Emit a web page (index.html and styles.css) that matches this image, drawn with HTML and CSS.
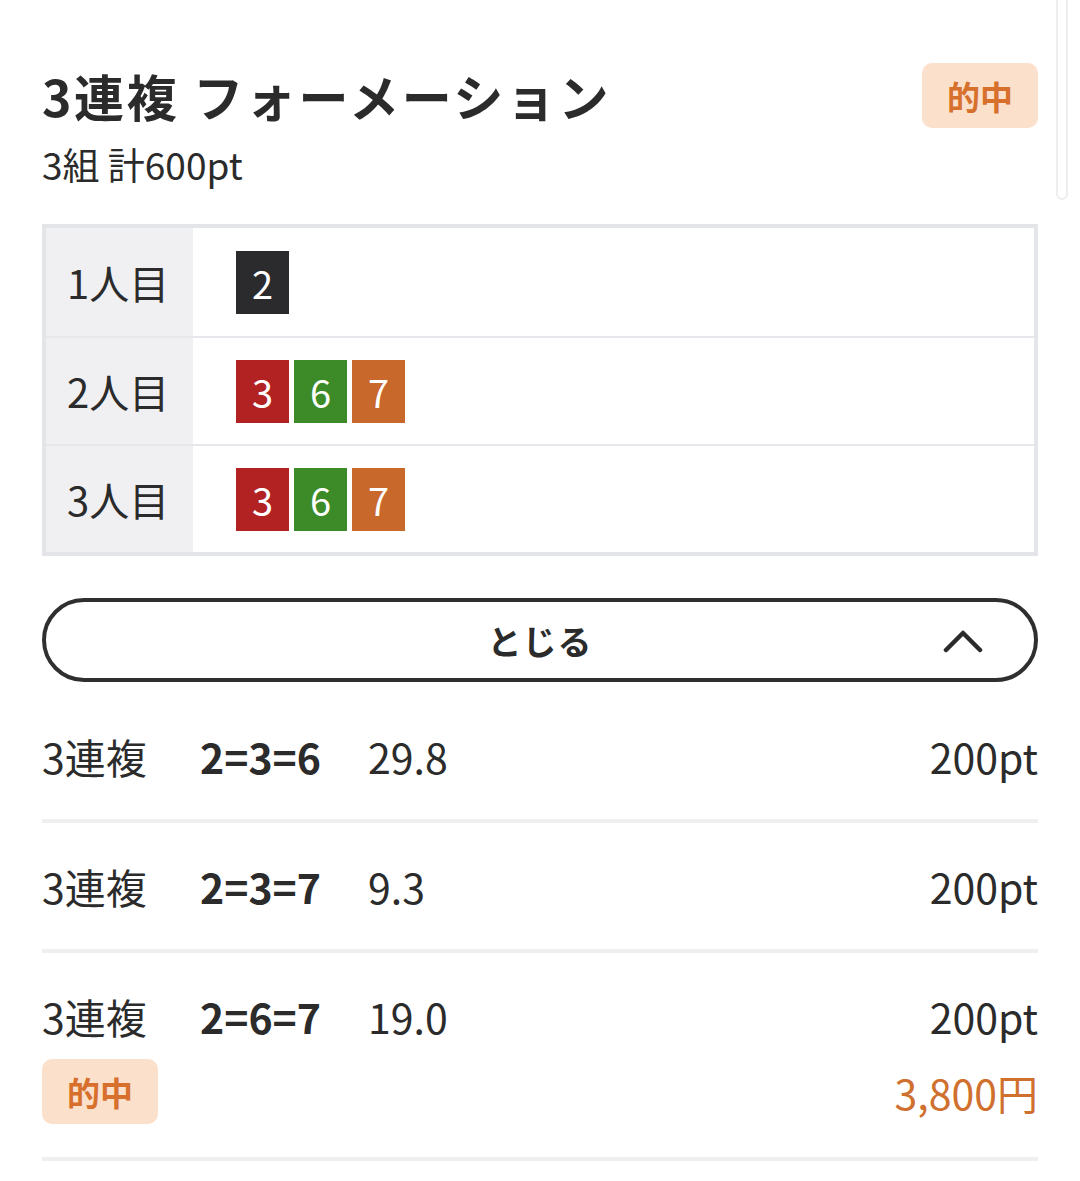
FILE: index.html
```html
<!DOCTYPE html>
<html lang="ja">
<head>
<meta charset="utf-8">
<link rel="stylesheet" href="styles.css">
</head>
<body>
<div class="scrollbar"></div>
<main class="page">
  <header class="head">
    <div class="head-text">
      <h1 class="title">3連複 フォーメーション</h1>
      <p class="sub">3組 計600pt</p>
    </div>
    <span class="badge badge-lg">的中</span>
  </header>

  <div class="table">
    <div class="trow">
      <div class="tlabel">1人目</div>
      <div class="tcell"><span class="num n-black">2</span></div>
    </div>
    <div class="trow">
      <div class="tlabel">2人目</div>
      <div class="tcell"><span class="num n-red">3</span><span class="num n-green">6</span><span class="num n-orange">7</span></div>
    </div>
    <div class="trow">
      <div class="tlabel">3人目</div>
      <div class="tcell"><span class="num n-red">3</span><span class="num n-green">6</span><span class="num n-orange">7</span></div>
    </div>
  </div>

  <button class="toggle">
    <span class="toggle-text">とじる</span>
    <svg class="chev" width="40" height="24" viewBox="0 0 40 24"><path d="M3 21 L20 4 L37 21" fill="none" stroke="#2b2b2b" stroke-width="4.5" stroke-linecap="round" stroke-linejoin="round"/></svg>
  </button>

  <ul class="list">
    <li class="item">
      <div class="line">
        <span class="kind">3連複</span><span class="combo">2=3=6</span><span class="odds">29.8</span><span class="pt">200pt</span>
      </div>
    </li>
    <li class="item">
      <div class="line">
        <span class="kind">3連複</span><span class="combo">2=3=7</span><span class="odds">9.3</span><span class="pt">200pt</span>
      </div>
    </li>
    <li class="item">
      <div class="line">
        <span class="kind">3連複</span><span class="combo">2=6=7</span><span class="odds">19.0</span><span class="pt">200pt</span>
      </div>
      <div class="line2">
        <span class="badge badge-sm">的中</span><span class="payout">3,800円</span>
      </div>
    </li>
  </ul>
</main>
</body>
</html>
```
FILE: styles.css
```css
* { box-sizing: border-box; }
html, body { margin: 0; padding: 0; background: #fff; }
body {
  font-family: "Noto Sans CJK JP", "Noto Sans", sans-serif;
  color: #2b2b2b;
}
.scrollbar {
  position: absolute;
  right: 12px;
  top: -10px;
  width: 12px;
  height: 210px;
  border: 2px solid #eeeeee;
  border-radius: 6px;
}
.page { padding: 63px 42px 0 42px; }
.head { display: flex; justify-content: space-between; align-items: flex-start; }
.title {
  margin: -3px 0 0 0;
  font-size: 50px;
  font-weight: 700;
  line-height: 70px;
  letter-spacing: 2.6px;
}
.sub {
  margin: 13px 0 0 0;
  font-size: 37px;
  font-weight: 400;
  line-height: 42px;
  letter-spacing: 0;
}
.badge {
  display: inline-flex;
  align-items: center;
  justify-content: center;
  background: #fbe0cc;
  color: #d7702c;
  font-weight: 700;
  border-radius: 10px;
}
.badge-lg { width: 116px; height: 65px; font-size: 33px; }
.badge-sm { width: 116px; height: 65px; font-size: 33px; }

.table {
  margin-top: 39px;
  border: 4px solid #e4e5e8;
  display: flex;
  flex-direction: column;
}
.trow { display: flex; height: 108px; }
.trow + .trow { border-top: 2px solid #e6e7ea; height: 108px; }
.tlabel {
  width: 147px;
  background: #f0f0f3;
  display: flex;
  align-items: center;
  padding-left: 21px;
  font-size: 40px;
  font-weight: 400;
}
.tcell { flex: 1; display: flex; align-items: center; padding-left: 43px; gap: 5px; }
.num {
  width: 53px;
  height: 63px;
  display: flex;
  align-items: center;
  justify-content: center;
  color: #fff;
  font-size: 38px;
  font-weight: 400;
}
.n-black { background: #2b2b2d; }
.n-red { background: #b22222; }
.n-green { background: #3c8b28; }
.n-orange { background: #c8682a; }

.toggle {
  margin-top: 42px;
  width: 100%;
  height: 84px;
  border: 4px solid #2f2f2f;
  border-radius: 42px;
  background: #fff;
  position: relative;
  display: flex;
  align-items: center;
  justify-content: center;
  font-family: inherit;
  color: #2b2b2b;
  padding: 0;
}
.toggle-text { font-size: 34px; font-weight: 700; letter-spacing: 1px; }
.chev { position: absolute; right: 51px; top: 27px; }

.list { list-style: none; margin: 11px 0 0 0; padding: 0; }
.item { border-bottom: 4px solid #efefef; padding: 33px 0 33px 0; }
.line { display: flex; align-items: center; height: 60px; font-size: 41px; }
.kind { width: 158px; }
.combo { width: 168px; font-weight: 700; }
.odds { flex: 1; }
.pt { text-align: right; }
.line2 { display: flex; justify-content: space-between; align-items: center; margin-top: 13px; }
.payout { color: #d0702e; font-size: 41px; }
```
